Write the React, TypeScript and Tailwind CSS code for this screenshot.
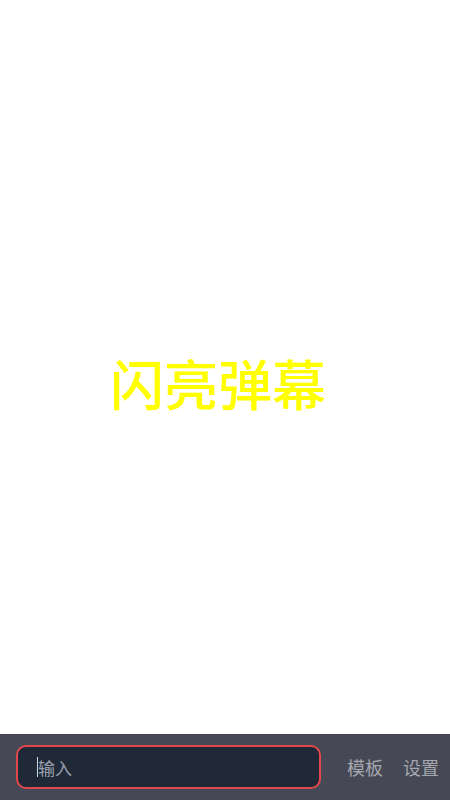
export default function App() {
  return (
    <div
      className="flex h-screen w-full flex-col bg-white"
      style={{ fontFamily: '"Noto Sans CJK SC", "Noto Sans", sans-serif' }}
    >
      {/* 弹幕展示区 */}
      <div className="flex flex-1 items-center justify-center pt-[32px] pr-[14px]">
        <span className="text-[54px] leading-none font-medium text-[#ffff00]">闪亮弹幕</span>
      </div>

      {/* 底部输入栏 */}
      <div className="flex h-[66px] items-center bg-[#464955] pl-4">
        <div className="flex h-[44px] w-[305px] items-center rounded-[10px] border-2 border-[#e2474c] bg-[#1f2937] pl-[19px]">
          <span className="h-[20px] w-px bg-[#cfd3da]" />
          <input
            className="h-full flex-1 bg-transparent text-[17px] text-gray-200 outline-none placeholder:text-[#9ca3af]"
            placeholder="输入"
          />
        </div>
        <button className="ml-[26px] text-[18px] text-[#a4a7af]">模板</button>
        <button className="ml-[20px] text-[18px] text-[#a4a7af]">设置</button>
      </div>
    </div>
  )
}
